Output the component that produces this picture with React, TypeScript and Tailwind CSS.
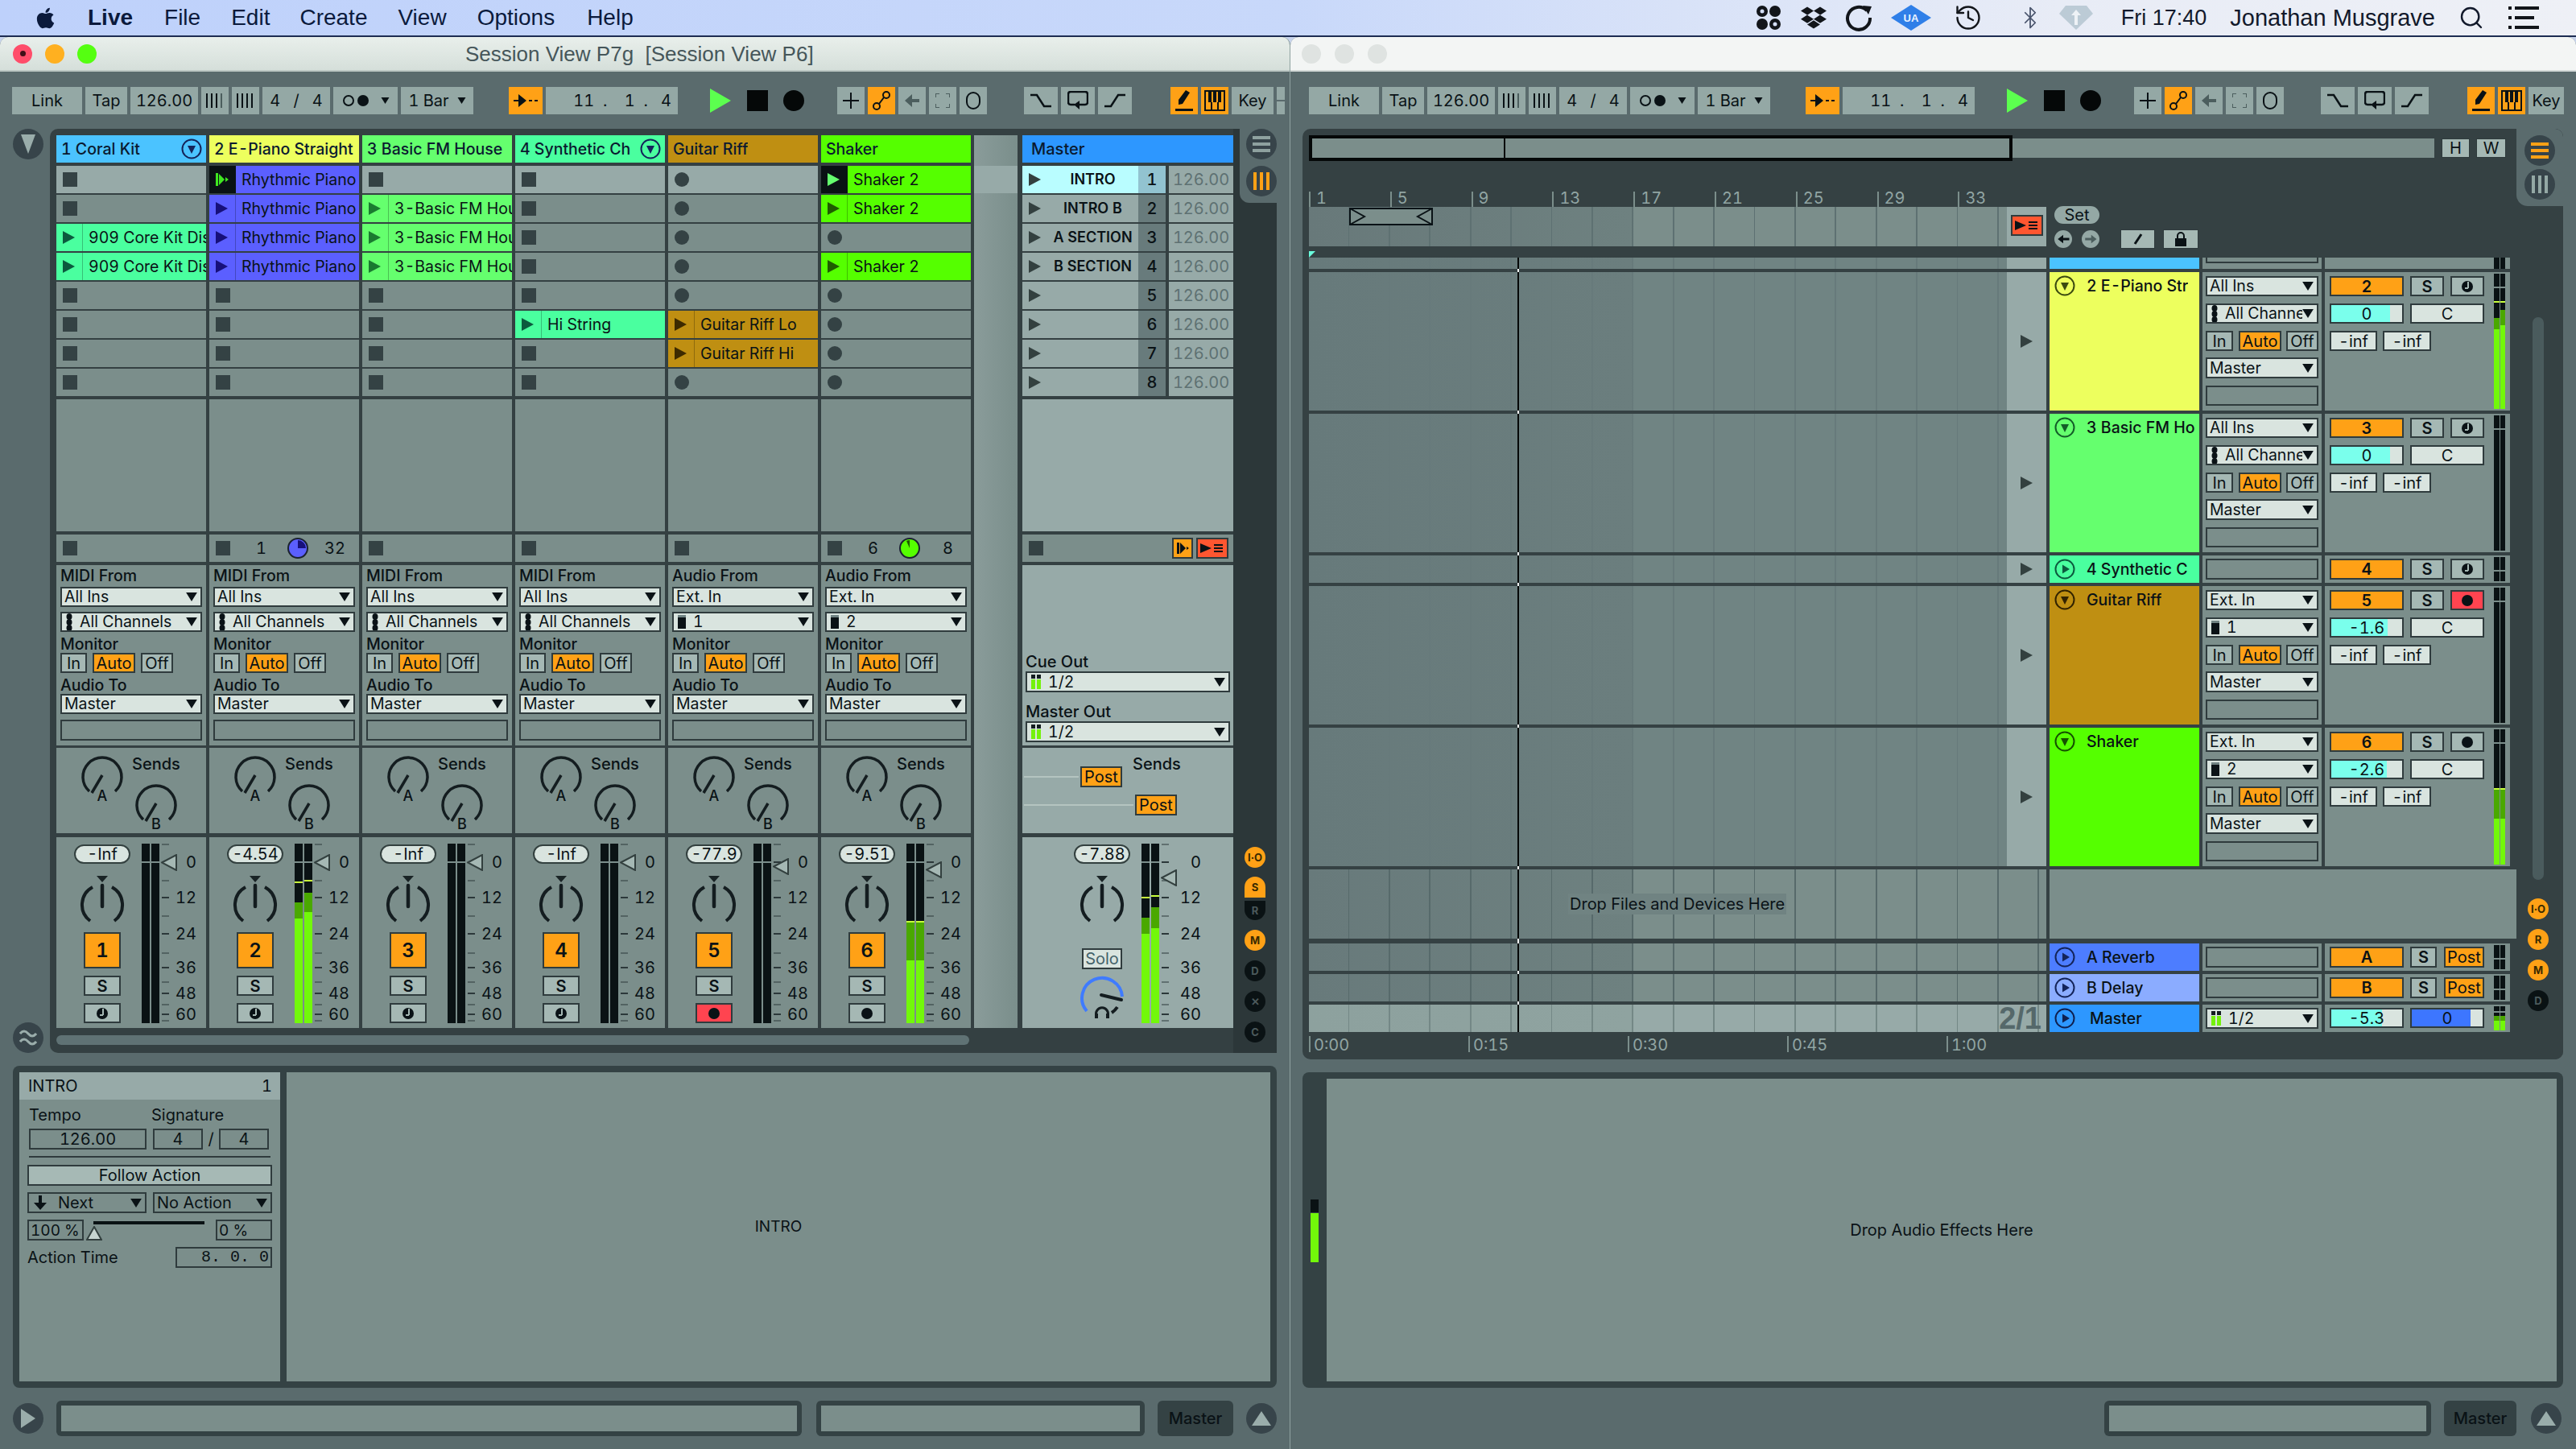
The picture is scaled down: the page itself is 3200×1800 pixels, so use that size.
import type { ReactNode } from "react";
import { FaApple, FaDropbox } from "react-icons/fa";
import { Bluetooth, History, Search } from "lucide-react";

// ---------- small drawn bits ----------

function Play({ className = "fill-[#33403f]", w = 15, h = 16 }: { className?: string; w?: number; h?: number }) {
  return (
    <svg width={w} height={h} viewBox="0 0 10 10" preserveAspectRatio="none" className={`shrink-0 ${className}`}>
      <polygon points="0,0 10,5 0,10" />
    </svg>
  );
}

function Caret({ size = 14 }: { size?: number }) {
  return (
    <svg width={size} height={size - 3} viewBox="0 0 10 8" className="shrink-0 fill-[#0a1216]">
      <polygon points="0,0 10,0 5,8" />
    </svg>
  );
}

function FoldIcon({ open = true, stroke = "stroke-[#14245a]", fill = "fill-[#14245a]" }: { open?: boolean; stroke?: string; fill?: string }) {
  return (
    <svg width="26" height="26" viewBox="0 0 26 26" className="shrink-0">
      <circle cx="13" cy="13" r="11.5" fill="none" strokeWidth="2" className={stroke} />
      {open ? <polygon points="8,9 18,9 13,19" className={fill} /> : <polygon points="10,7.5 19,13 10,18.5" className={fill} />}
    </svg>
  );
}

function SendKnob({ letter }: { letter: string }) {
  return (
    <svg width="56" height="60" viewBox="0 0 56 60" className="shrink-0">
      <path d="M12 46 A24 24 0 1 1 44 46" fill="none" stroke="#141d20" strokeWidth="3.5" />
      <line x1="28" y1="26" x2="15" y2="48" stroke="#141d20" strokeWidth="3.5" />
      <text x="28" y="58" textAnchor="middle" fontSize="18" fontWeight="500" fill="#0a1216" fontFamily="Inter, sans-serif">
        {letter}
      </text>
    </svg>
  );
}

function PanKnob() {
  return (
    <svg width="56" height="60" viewBox="0 0 56 60" className="shrink-0">
      <polygon points="21,0 35,0 28,8" fill="#1a2426" />
      <path d="M16 14 A25 25 0 0 0 13 56" fill="none" stroke="#141d20" strokeWidth="4" />
      <path d="M40 14 A25 25 0 0 1 43 56" fill="none" stroke="#141d20" strokeWidth="4" />
      <line x1="28" y1="12" x2="28" y2="38" stroke="#141d20" strokeWidth="4.5" strokeLinecap="round" />
    </svg>
  );
}

function CueKnob() {
  return (
    <svg width="56" height="56" viewBox="0 0 56 56" className="shrink-0">
      <path d="M9 44 A25 25 0 1 1 53 26" fill="none" stroke="#3f7bff" strokeWidth="4" />
      <line x1="27" y1="24" x2="52" y2="30" stroke="#141d20" strokeWidth="4" strokeLinecap="round" />
      <path d="M47 39 A25 25 0 0 1 40 46" fill="none" stroke="#141d20" strokeWidth="4" />
      <path d="M21 50 A7.5 7.5 0 1 1 35 50" fill="none" stroke="#141d20" strokeWidth="3" />
      <rect x="19" y="47" width="4" height="6" fill="#141d20" />
      <rect x="33" y="47" width="4" height="6" fill="#141d20" />
    </svg>
  );
}

function MiniMeter() {
  return (
    <svg width="12" height="18" viewBox="0 0 12 18" className="shrink-0">
      <rect x="0" y="0" width="5" height="5" fill="#141d20" />
      <rect x="7" y="0" width="5" height="5" fill="#141d20" />
      <rect x="0" y="6" width="5" height="12" fill="#74f20c" />
      <rect x="7" y="6" width="5" height="12" fill="#74f20c" />
    </svg>
  );
}

function ChainIcon() {
  return (
    <svg width="8" height="22" viewBox="0 0 8 22" className="shrink-0 fill-[#0a1216]">
      <ellipse cx="4" cy="4" rx="3.5" ry="4" />
      <ellipse cx="4" cy="11" rx="3.5" ry="4" />
      <ellipse cx="4" cy="18" rx="3.5" ry="4" />
    </svg>
  );
}

function InputIcon() {
  return (
    <svg width="10" height="17" viewBox="0 0 10 17" className="shrink-0">
      <rect width="10" height="3" fill="#6f8282" />
      <rect y="3" width="10" height="14" fill="#0a1216" />
    </svg>
  );
}

function MonitorGlyph() {
  return (
    <svg width="16" height="16" viewBox="0 0 16 16">
      <circle cx="8" cy="8" r="7" fill="#0a1216" />
      <rect x="8" y="2" width="2" height="8" fill="#a5b8b4" />
      <rect x="5" y="9" width="4" height="2" fill="#a5b8b4" />
    </svg>
  );
}

// ---------- controls ----------

const box = "border-[2px] border-[#2f3b3d]";

function Select({ label, icon, w = "w-full", h = "h-[25px]" }: { label: string; icon?: ReactNode; w?: string; h?: string }) {
  return (
    <div className={`${w} ${h} ${box} bg-[#d9e4df] flex items-center pl-[3px] pr-[4px] text-[19.5px] leading-[21px] text-[#0a1216] overflow-hidden`}>
      {icon && <span className="ml-[2px] mr-[9px] flex items-center">{icon}</span>}
      <span className="flex-1 min-w-0 overflow-hidden whitespace-nowrap">{label}</span>
      <Caret />
    </div>
  );
}

function Square({ w, h = "h-[25px]", on, red, soft, children }: { w: string; h?: string; on?: boolean; red?: boolean; soft?: boolean; children?: ReactNode }) {
  const bg = on ? "bg-[#ffa116]" : red ? "bg-[#ff4450]" : soft ? "bg-[#d9e4df]" : "bg-[#a5b8b4]";
  return (
    <div className={`${w} ${h} ${box} ${bg} flex items-center justify-center text-[20px] leading-none text-[#0a1216] shrink-0`}>{children}</div>
  );
}

function Monitor({ w1, w2, w3, gapA, gapB }: { w1: string; w2: string; w3: string; gapA: string; gapB: string }) {
  return (
    <div className="flex">
      <Square w={w1}>In</Square>
      <div className={gapA} />
      <Square w={w2} on>Auto</Square>
      <div className={gapB} />
      <Square w={w3}>Off</Square>
    </div>
  );
}

type Bar = { peak?: number; dark: number; bright: number };

function MeterBar({ bar, w, split, total }: { bar?: Bar; w: string; split: number; total: number }) {
  return (
    <div className={`${w} h-full relative bg-[#0a1214] flex flex-col`}>
      {bar && (
        <>
          <div style={{ height: bar.dark }} className="shrink-0" />
          <div style={{ height: bar.bright - bar.dark }} className="shrink-0 bg-[#4aa800]" />
          <div style={{ height: total - bar.bright }} className="shrink-0 bg-[#72f80a]" />
          {bar.peak !== undefined && <div style={{ top: bar.peak }} className="absolute left-0 right-0 h-[2px] bg-[#c8ff3c]" />}
        </>
      )}
      <div style={{ top: split }} className="absolute left-0 right-0 h-[2px] bg-[#7b8e8b]" />
    </div>
  );
}

const tickTops = [0, 22, 45, 66, 89, 111, 135, 153, 171, 185, 199, 211, 219];
const scaleLabels = [
  { top: 22, t: "0" },
  { top: 66, t: "12" },
  { top: 111, t: "24" },
  { top: 153, t: "36" },
  { top: 185, t: "48" },
  { top: 211, t: "60" },
];

function Scale({ fader, wide }: { fader: number; wide?: boolean }) {
  return (
    <div className={`relative h-[223px] ${wide ? "w-[50px]" : "w-[44px]"}`}>
      {tickTops.map((t) => (
        <div
          key={t}
          style={{ top: t }}
          className={`absolute left-[1px] h-[2px] bg-[#2c383a] ${[22, 66, 111, 153, 185, 211].includes(t) ? "w-[9px]" : "w-[9px] opacity-50"}`}
        />
      ))}
      {scaleLabels.map((l) => (
        <div key={l.t} style={{ top: l.top - 10 }} className="absolute right-0 text-[20px] leading-[22px] text-[#0a1216]">
          {l.t}
        </div>
      ))}
      <svg style={{ top: fader }} width="20" height="21" viewBox="0 0 20 21" className="absolute left-0">
        <polygon points="1,10.5 19,1 19,20" fill="#a5b8b4" stroke="#33403f" strokeWidth="2" />
      </svg>
    </div>
  );
}

// ---------- session view data ----------

type Track = {
  title: string;
  head: string;
  fold?: boolean;
  clipBg: string;
  tri: string;
  clips: (string | null)[];
  audio?: boolean;
  inA: string;
  inB: string;
  inIcon: ReactNode;
  vol: string;
  num: string;
  fader: number;
  bars?: [Bar, Bar];
  stop?: ReactNode;
  arm?: boolean;
};

const rhythm = "Rhythmic Piano";
const basic = "3-Basic FM House";

const tracks: Track[] = [
  {
    title: "1 Coral Kit", head: "bg-[#4bc3ff]", fold: true, clipBg: "bg-[#4aff9f]", tri: "fill-[#0c5a3e]",
    clips: [null, null, "909 Core Kit Dis", "909 Core Kit Dis", null, null, null, null],
    inA: "All Ins", inB: "All Channels", inIcon: <ChainIcon />, vol: "-Inf", num: "1", fader: 13,
  },
  {
    title: "2 E-Piano Straight", head: "bg-[#edff5e]", clipBg: "bg-[#5b5fff]", tri: "fill-[#17107a]",
    clips: [rhythm, rhythm, rhythm, rhythm, null, null, null, null],
    inA: "All Ins", inB: "All Channels", inIcon: <ChainIcon />, vol: "-4.54", num: "2", fader: 13,
    bars: [{ peak: 47, dark: 73, bright: 93 }, { peak: 45, dark: 61, bright: 85 }],
    stop: (
      <div className="flex flex-1 items-center text-[20px] text-[#0a1216]">
        <span className="ml-[32px]">1</span>
        <svg width="26" height="26" viewBox="0 0 26 26" className="ml-[26px]">
          <circle cx="13" cy="13" r="12" fill="#5b5fff" stroke="#1b2230" strokeWidth="2" />
          <path d="M13 13 L13 3 A10 10 0 0 1 23 13 Z" fill="#17107a" />
        </svg>
        <span className="ml-[20px]">32</span>
      </div>
    ),
  },
  {
    title: "3 Basic FM House", head: "bg-[#65ff6e]", clipBg: "bg-[#65ff6e]", tri: "fill-[#1a7a30]",
    clips: [null, basic, basic, basic, null, null, null, null],
    inA: "All Ins", inB: "All Channels", inIcon: <ChainIcon />, vol: "-Inf", num: "3", fader: 13,
  },
  {
    title: "4 Synthetic Ch", head: "bg-[#4aff9f]", fold: true, clipBg: "bg-[#4aff9f]", tri: "fill-[#0c5a3e]",
    clips: [null, null, null, null, null, "Hi String", null, null],
    inA: "All Ins", inB: "All Channels", inIcon: <ChainIcon />, vol: "-Inf", num: "4", fader: 13,
  },
  {
    title: "Guitar Riff", head: "bg-[#bf8f12]", clipBg: "bg-[#bf8f12]", tri: "fill-[#3d2a00]",
    clips: [null, null, null, null, null, "Guitar Riff Lo", "Guitar Riff Hi", null], audio: true,
    inA: "Ext. In", inB: "1", inIcon: <InputIcon />, vol: "-77.9", num: "5", fader: 18, arm: true,
  },
  {
    title: "Shaker", head: "bg-[#55ff00]", clipBg: "bg-[#55ff00]", tri: "fill-[#1f5c00]",
    clips: ["Shaker 2", "Shaker 2", null, "Shaker 2", null, null, null, null], audio: true,
    inA: "Ext. In", inB: "2", inIcon: <InputIcon />, vol: "-9.51", num: "6", fader: 22,
    bars: [{ peak: 96, dark: 96, bright: 145 }, { peak: 96, dark: 96, bright: 145 }],
    stop: (
      <div className="flex flex-1 items-center text-[20px] text-[#0a1216]">
        <span className="ml-[32px]">6</span>
        <svg width="26" height="26" viewBox="0 0 26 26" className="ml-[26px]">
          <circle cx="13" cy="13" r="12" fill="#55ff00" stroke="#1b2230" strokeWidth="2" />
          <path d="M13 13 L13 3 A10 10 0 0 0 9 4 Z" fill="#1f5c00" />
        </svg>
        <span className="ml-[28px]">8</span>
      </div>
    ),
  },
];

const scenes = ["INTRO", "INTRO B", "A SECTION", "B SECTION", "", "", "", ""];

// ---------- session view ----------

function SlotRow({ t, clip, i }: { t: Track; clip: string | null; i: number }) {
  const live = i === 0;
  if (clip) {
    const launching = live && t.title.startsWith("2");
    const playing = live && t.title === "Shaker";
    return (
      <div className={`h-[34px] flex ${t.clipBg}`}>
        <div className={`w-[33px] shrink-0 flex items-center pl-[8px] ${launching || playing ? "bg-[#0a1214]" : "border-r border-[#00000040]"}`}>
          {launching ? (
            <svg width="16" height="16" viewBox="0 0 16 16" className="fill-[#3fe820]">
              <rect x="0" y="0" width="3" height="16" />
              <polygon points="4,1 11,8 4,15" />
              <polygon points="12,5 16,8 12,11" />
            </svg>
          ) : playing ? (
            <Play className="fill-[#65ff6e]" />
          ) : (
            <Play className={t.tri} />
          )}
        </div>
        <div className="pl-[7px] flex items-center text-[19.5px] leading-[26px] text-[#0a1216] whitespace-nowrap overflow-hidden">{clip}</div>
      </div>
    );
  }
  return (
    <div className={`h-[34px] flex items-center pl-[8px] ${live ? "bg-[#97aaa8]" : "bg-[#7b8e8b]"}`}>
      <div className={`w-[18px] h-[18px] bg-[#344244] ${t.audio ? "rounded-full" : ""}`} />
    </div>
  );
}

function TrackColumn({ t }: { t: Track }) {
  const label = "text-[19.5px] font-medium leading-[22px] text-[#0a1216] whitespace-nowrap";
  return (
    <div className="w-[186px] shrink-0 flex flex-col">
      <div className={`h-[34px] ${t.head} flex items-center justify-between pl-[6px] pr-[5px] text-[19.5px] font-medium leading-[26px] text-[#0a1a30] whitespace-nowrap overflow-hidden`}>
        <span className="overflow-hidden">{t.title}</span>
        {t.fold && <FoldIcon />}
      </div>
      <div className="mt-[4px] flex flex-col gap-[2px]">
        {t.clips.map((c, i) => (
          <SlotRow key={i} t={t} clip={c} i={i} />
        ))}
      </div>
      <div className="mt-[4px] h-[164px] bg-[#7b8e8b]" />
      <div className="mt-[4px] h-[34px] bg-[#7b8e8b] flex items-center pl-[8px]">
        <div className="w-[18px] h-[18px] shrink-0 bg-[#344244]" />
        {t.stop}
      </div>
      <div className="mt-[4px] h-[224px] bg-[#7b8e8b] px-[5px] flex flex-col">
        <div className={`h-[27px] flex items-end pb-[3px] ${label}`}>{t.audio ? "Audio From" : "MIDI From"}</div>
        <Select label={t.inA} />
        <div className="mt-[6px]"><Select label={t.inB} icon={t.inIcon} /></div>
        <div className={`h-[26px] flex items-end ${label}`}>Monitor</div>
        <Monitor w1="w-[33px]" w2="w-[53px]" w3="w-[40px]" gapA="w-[7px]" gapB="w-[7px]" />
        <div className={`h-[26px] flex items-end ${label}`}>Audio To</div>
        <Select label="Master" />
        <div className={`mt-[7px] h-[26px] ${box}`} />
      </div>
      <div className="mt-[3px] h-[106px] bg-[#7b8e8b] flex">
        <div className="ml-[29px] mt-[8px]"><SendKnob letter="A" /></div>
        <div className="ml-[6px] flex flex-col">
          <div className="mt-[9px] h-[22px] text-[20px] font-medium leading-[22px] text-[#0a1216] whitespace-nowrap pl-[3px]">Sends</div>
          <div className="mt-[12px] ml-[5px]"><SendKnob letter="B" /></div>
        </div>
      </div>
      <div className="mt-[5px] h-[237px] bg-[#7b8e8b] flex pl-[22px]">
        <div className="w-[70px] shrink-0 flex flex-col items-center">
          <div className="mt-[9px] w-[70px] h-[24px] rounded-full border-[2px] border-[#33403f] bg-[#d9e4df] flex items-center justify-center text-[20px] leading-none text-[#0a1216]">{t.vol}</div>
          <div className="mt-[15px]"><PanKnob /></div>
          <div className={`mt-[10px] w-[46px] h-[45px] ${box} bg-[#ffa116] flex items-center justify-center text-[24px] font-semibold leading-none text-[#0a1216]`}>{t.num}</div>
          <Square w="w-[46px] mt-[9px]">
            <span className="font-semibold">S</span>
          </Square>
          {t.audio ? (
            <Square w="w-[46px] mt-[9px]" red={t.arm}>
              <span className="w-[14px] h-[14px] rounded-full bg-[#0a1216]" />
            </Square>
          ) : (
            <Square w="w-[46px] mt-[9px]"><MonitorGlyph /></Square>
          )}
        </div>
        <div className="ml-[14px] mt-[8px] h-[223px] flex gap-[2px]">
          <MeterBar bar={t.bars?.[0]} w="w-[10px]" split={22} total={223} />
          <MeterBar bar={t.bars?.[1]} w="w-[10px]" split={22} total={223} />
        </div>
        <div className="ml-[2px] mt-[8px]"><Scale fader={t.fader} /></div>
      </div>
    </div>
  );
}

function MasterColumn() {
  const label = "text-[20px] font-medium leading-[20px] text-[#0a1216] whitespace-nowrap";
  return (
    <div className="w-[262px] shrink-0 flex flex-col">
      <div className="h-[34px] bg-[#2d97ff] flex items-center pl-[11px] text-[20px] font-medium text-[#0a1a30]">Master</div>
      <div className="mt-[4px] flex flex-col gap-[2px]">
        {scenes.map((s, i) => (
          <div key={i} className="h-[34px] flex text-[18px] leading-none">
            <div className={`w-[144px] flex items-center pl-[8px] ${i === 0 ? "bg-[#b9fdff]" : "bg-[#97aaa8]"}`}>
              <Play className="fill-[#33403f]" />
              <span className="flex-1 text-center font-semibold text-[#0a1216] whitespace-nowrap pl-[8px]">{s}</span>
            </div>
            <div className={`w-[34px] flex items-center justify-center text-[20px] font-medium text-[#0a1216] ${i === 0 ? "bg-[#92c3d0]" : "bg-[#687b7c]"}`}>{i + 1}</div>
            <div className="ml-[4px] w-[80px] bg-[#97aaa8] flex items-center justify-center text-[20px] text-[#5e7172]">126.00</div>
          </div>
        ))}
      </div>
      <div className="mt-[4px] h-[164px] bg-[#97aaa8]" />
      <div className="mt-[4px] h-[34px] bg-[#7b8e8b] flex items-center pl-[8px] pr-[6px]">
        <div className="w-[18px] h-[18px] bg-[#344244]" />
        <div className="ml-auto w-[26px] h-[26px] border-[2px] border-[#2f3b3d] bg-[#ffa116] flex items-center justify-center">
          <svg width="16" height="16" viewBox="0 0 16 16" className="fill-[#0a1216]">
            <rect x="1" y="1" width="3" height="14" />
            <polygon points="5,1 12,8 5,15" />
            <polygon points="13,6 16,8 13,10" />
          </svg>
        </div>
        <div className="ml-[4px] w-[40px] h-[26px] border-[2px] border-[#2f3b3d] bg-[#ff5630] flex items-center justify-center">
          <svg width="30" height="16" viewBox="0 0 30 16" className="fill-[#0a1216]">
            <polygon points="0,2 14,8 0,14" />
            <rect x="17" y="3" width="11" height="2" />
            <rect x="17" y="7" width="11" height="2" />
            <rect x="17" y="11" width="11" height="2" />
          </svg>
        </div>
      </div>
      <div className="mt-[4px] h-[224px] bg-[#97aaa8] px-[4px] flex flex-col justify-end pb-[4px]">
        <div className={`h-[22px] ${label}`}>Cue Out</div>
        <Select label="1/2" icon={<MiniMeter />} h="h-[26px]" />
        <div className={`mt-[14px] h-[22px] ${label}`}>Master Out</div>
        <Select label="1/2" icon={<MiniMeter />} h="h-[26px]" />
      </div>
      <div className="mt-[3px] h-[106px] bg-[#97aaa8] flex flex-col relative">
        <div className="absolute left-[137px] top-[9px] h-[22px] text-[20px] font-medium leading-[22px] text-[#0a1216]">Sends</div>
        <div className="mt-[23px] h-[26px] flex items-center pl-[2px]">
          <div className="w-[68px] h-[2px] bg-[#b4c4c0]" />
          <div className={`ml-[2px] w-[52px] h-[26px] ${box} bg-[#ffa116] flex items-center justify-center text-[20px] leading-none text-[#0a1216]`}>Post</div>
        </div>
        <div className="mt-[9px] h-[26px] flex items-center pl-[2px]">
          <div className="w-[136px] h-[2px] bg-[#b4c4c0]" />
          <div className={`ml-[2px] w-[52px] h-[26px] ${box} bg-[#ffa116] flex items-center justify-center text-[20px] leading-none text-[#0a1216]`}>Post</div>
        </div>
      </div>
      <div className="mt-[5px] h-[237px] bg-[#97aaa8] flex pl-[64px]">
        <div className="w-[70px] shrink-0 flex flex-col items-center">
          <div className="mt-[9px] w-[70px] h-[24px] rounded-full border-[2px] border-[#33403f] bg-[#d9e4df] flex items-center justify-center text-[20px] leading-none text-[#0a1216]">-7.88</div>
          <div className="mt-[15px]"><PanKnob /></div>
          <div className={`mt-[30px] w-[50px] h-[26px] ${box} bg-[#d9e4df] flex items-center justify-center text-[20px] leading-none text-[#44626a]`}>Solo</div>
          <div className="mt-[8px]"><CueKnob /></div>
        </div>
        <div className="ml-[14px] mt-[8px] h-[223px] flex gap-[2px]">
          <MeterBar bar={{ peak: 66, dark: 92, bright: 112 }} w="w-[10px]" split={22} total={223} />
          <MeterBar bar={{ peak: 64, dark: 79, bright: 105 }} w="w-[10px]" split={22} total={223} />
        </div>
        <div className="ml-[2px] mt-[8px]"><Scale fader={32} wide /></div>
      </div>
    </div>
  );
}

function SideDot({ label, on, top = "", shape = "rounded-full", h = "h-[26px]" }: { label: string; on?: boolean; top?: string; shape?: string; h?: string }) {
  return (
    <div className={`w-[26px] ${h} ${shape} ${top} ${on ? "bg-[#ffa116] text-[#3a2a00]" : "bg-[#0a1214] text-[#4c5a5c]"} flex items-center justify-center text-[13px] font-bold leading-none`}>
      {label}
    </div>
  );
}

function CircleBtn({ children, top = "" }: { children: ReactNode; top?: string }) {
  return <div className={`w-[38px] h-[38px] rounded-full bg-[#37444a] flex items-center justify-center shrink-0 ${top}`}>{children}</div>;
}

const bars3 = (c: string) => (
  <svg width="22" height="20" viewBox="0 0 22 20" className={c}>
    <rect width="22" height="4" />
    <rect y="8" width="22" height="4" />
    <rect y="16" width="22" height="4" />
  </svg>
);
const cols3 = (c: string) => (
  <svg width="20" height="22" viewBox="0 0 20 22" className={c}>
    <rect width="4" height="22" />
    <rect x="8" width="4" height="22" />
    <rect x="16" width="4" height="22" />
  </svg>
);

// ---------- toolbar ----------

function TB({ w, on, ml = "ml-[4px]", children }: { w: string; on?: boolean; ml?: string; children?: ReactNode }) {
  return (
    <div className={`${w} ${ml} h-[34px] shrink-0 ${on ? "bg-[#ffa116]" : "bg-[#94a8a5]"} flex items-center justify-center text-[20px] leading-none text-[#0a1216] whitespace-nowrap`}>
      {children}
    </div>
  );
}

function BarLines({ n }: { n: number }) {
  return (
    <svg width="24" height="18" viewBox="0 0 24 18">
      {Array.from({ length: 4 }).map((_, i) => (
        <rect key={i} x={i * 6 + 1} width="2" height="18" fill={i < n ? "#0a1216" : "#4c5e5e"} />
      ))}
    </svg>
  );
}

function Toolbar({ first, keyW, sliver }: { first: string; keyW: string; sliver?: boolean }) {
  const ink = "stroke-[#0a1216]";
  return (
    <div className={`h-[71px] pt-[19px] flex items-start shrink-0 ${first}`}>
      <TB w="w-[87px]" ml="ml-0">Link</TB>
      <TB w="w-[52px]">Tap</TB>
      <TB w="w-[84px]">126.00</TB>
      <TB w="w-[34px]"><BarLines n={3} /></TB>
      <TB w="w-[34px]"><BarLines n={4} /></TB>
      <TB w="w-[84px]"><span className="whitespace-pre">4   /   4</span></TB>
      <TB w="w-[80px]">
        <svg width="34" height="18" viewBox="0 0 34 18" className="mr-[14px]">
          <circle cx="8" cy="9" r="6" fill="none" stroke="#0a1216" strokeWidth="2" />
          <circle cx="26" cy="9" r="7" fill="#0a1216" />
        </svg>
        <Caret size={11} />
      </TB>
      <TB w="w-[90px]"><span className="mr-[10px]">1 Bar</span><Caret size={11} /></TB>
      <TB w="w-[42px]" on ml="ml-[44px]">
        <svg width="30" height="18" viewBox="0 0 30 18" className="fill-[#0a1216]">
          <polygon points="6,1 16,9 6,17" />
          <rect y="8" width="10" height="2" />
          <rect x="19" y="8" width="4" height="2" />
          <rect x="26" y="8" width="4" height="2" />
        </svg>
      </TB>
      <TB w="w-[164px]"><span className="w-full whitespace-pre text-right pr-[8px]">11  .    1  .   4</span></TB>
      <div className="ml-[40px] h-[34px] flex items-center">
        <svg width="26" height="30" viewBox="0 0 26 30" className="fill-[#5cff4f]"><polygon points="0,0 26,15 0,30" /></svg>
      </div>
      <div className="ml-[20px] mt-[4px] w-[26px] h-[26px] bg-[#050808]" />
      <div className="ml-[19px] mt-[4px] w-[26px] h-[26px] rounded-full bg-[#050808]" />
      <TB w="w-[34px]" ml="ml-[41px]">
        <svg width="20" height="20" viewBox="0 0 20 20" className="fill-[#0a1216]"><rect x="9" width="2" height="20" /><rect y="9" width="20" height="2" /></svg>
      </TB>
      <TB w="w-[34px]" on>
        <svg width="22" height="24" viewBox="0 0 22 24" fill="none" strokeWidth="2" className={ink}>
          <circle cx="5" cy="19" r="4" /><circle cx="17" cy="5" r="4" /><line x1="8" y1="16" x2="14" y2="8" />
        </svg>
      </TB>
      <TB w="w-[34px]">
        <svg width="18" height="16" viewBox="0 0 18 16" className="fill-[#4c5e5e]"><polygon points="0,8 9,0 9,6 18,6 18,10 9,10 9,16" /></svg>
      </TB>
      <TB w="w-[34px]">
        <svg width="18" height="18" viewBox="0 0 18 18" fill="none" strokeWidth="2" className="stroke-[#4c5e5e]">
          <path d="M0 5V0H5M13 0H18V5M18 13V18H13M5 18H0V13" />
        </svg>
      </TB>
      <TB w="w-[34px]"><div className="w-[18px] h-[22px] rounded-full border-[2px] border-[#0a1216]" /></TB>
      <TB w="w-[42px]" ml="ml-[46px]">
        <svg width="26" height="18" viewBox="0 0 26 18" fill="none" strokeWidth="2.5" className={ink}><path d="M0 2H8L17 16H26" /></svg>
      </TB>
      <TB w="w-[42px]">
        <svg width="26" height="24" viewBox="0 0 26 24" fill="none" strokeWidth="2.5" className={ink}>
          <path d="M9 17H4Q1 17 1 14V4Q1 1 4 1H22Q25 1 25 4V14Q25 17 22 17H14" />
          <polygon points="15,12 15,23 8,17" fill="#0a1216" stroke="none" />
        </svg>
      </TB>
      <TB w="w-[42px]">
        <svg width="26" height="18" viewBox="0 0 26 18" fill="none" strokeWidth="2.5" className={ink}><path d="M0 16H8L17 2H26" /></svg>
      </TB>
      <TB w="w-[34px]" on ml="ml-[48px]">
        <svg width="22" height="26" viewBox="0 0 22 26" className="fill-[#0a1216]">
          <polygon points="4,18 4,12 13,0 18,3 9,17" />
          <rect y="23" width="22" height="3" />
        </svg>
      </TB>
      <TB w="w-[34px]" on>
        <svg width="26" height="26" viewBox="0 0 26 26">
          <rect x="1" y="1" width="24" height="24" fill="none" stroke="#0a1216" strokeWidth="2" />
          <rect x="5" y="1" width="4" height="14" fill="#0a1216" />
          <rect x="11" y="1" width="4" height="14" fill="#0a1216" />
          <rect x="17" y="1" width="4" height="14" fill="#0a1216" />
          <rect x="8" y="15" width="2" height="10" fill="#0a1216" />
          <rect x="16" y="15" width="2" height="10" fill="#0a1216" />
        </svg>
      </TB>
      <TB w={keyW}>Key</TB>
      {sliver && (
        <div className="ml-[4px] w-[10px] h-[34px] flex flex-col justify-between">
          <div className="h-[16px] bg-[#94a8a5]" />
          <div className="h-[16px] bg-[#94a8a5]" />
        </div>
      )}
    </div>
  );
}

// ---------- arrangement view ----------

const laneBase =
  "bg-[image:repeating-linear-gradient(90deg,transparent_0,transparent_48.6px,#677a7b_48.6px,#677a7b_50.4px),linear-gradient(90deg,#677a7b,#6b7e7e_400px,#708483_404px)]";
const laneBold =
  "bg-[image:repeating-linear-gradient(90deg,transparent_0,transparent_48.6px,#576a6b_48.6px,#576a6b_50.4px),linear-gradient(90deg,#687a7b,#6e8180_400px,#7b8e8b_404px)]";
const laneLight =
  "bg-[image:repeating-linear-gradient(90deg,transparent_0,transparent_48.6px,#748886_48.6px,#748886_50.4px),linear-gradient(90deg,#8da19e,#8fa3a0_400px,#97aaa8_404px)]";

function Lane({ w, kind = laneBase, children }: { w: string; kind?: string; children?: ReactNode }) {
  return (
    <div className={`${w} shrink-0 h-full relative ${kind}`}>
      <div className="absolute left-[259px] top-0 bottom-0 w-[2px] bg-[#050808]" />
      {children}
    </div>
  );
}

function Launch() {
  return (
    <div className="w-[49px] shrink-0 h-full bg-[#97aaa8] flex items-center justify-center">
      <Play className="fill-[#33403f]" />
    </div>
  );
}

function NameCell({ name, bg, open = true, stroke, fill, ink = "text-[#0a1216]", pl = "ml-[14px]" }: { name: string; bg: string; open?: boolean; stroke: string; fill: string; ink?: string; pl?: string }) {
  return (
    <div className={`w-[186px] shrink-0 h-full ${bg} pl-[6px] pt-[4px] flex items-start`}>
      <FoldIcon open={open} stroke={stroke} fill={fill} />
      <span className={`${pl} h-[26px] flex items-center text-[19.5px] font-medium leading-[26px] ${ink} whitespace-nowrap overflow-hidden`}>{name}</span>
    </div>
  );
}

function BarValue({ v, width, blue }: { v: string; width: number; blue?: boolean }) {
  return (
    <div className={`w-[92px] h-[25px] ${box} bg-[#d9e4df] relative flex items-center justify-center text-[20px] leading-none text-[#0a1216]`}>
      <div style={{ width: `${width}%` }} className={`absolute left-0 top-0 bottom-0 ${blue ? "bg-[#3d76ff]" : "bg-[#7affec]"}`} />
      <span className="relative">{v}</span>
    </div>
  );
}

type ArrTrack = {
  name: string;
  bg: string;
  stroke: string;
  fill: string;
  inA: string;
  inB: string;
  icon: ReactNode;
  num: string;
  pan: string;
  panW: number;
  mon: ReactNode;
  bars?: [Bar, Bar];
};

const arrTracks: ArrTrack[] = [
  {
    name: "2 E-Piano Str", bg: "bg-[#edff5e]", stroke: "stroke-[#3c4a10]", fill: "fill-[#3c4a10]",
    inA: "All Ins", inB: "All Channels", icon: <ChainIcon />, num: "2", pan: "0", panW: 83, mon: <Square w="w-[42px]"><MonitorGlyph /></Square>,
    bars: [{ peak: 34, dark: 55, bright: 69 }, { peak: 34, dark: 45, bright: 64 }],
  },
  {
    name: "3 Basic FM Ho", bg: "bg-[#65ff6e]", stroke: "stroke-[#135d28]", fill: "fill-[#135d28]",
    inA: "All Ins", inB: "All Channels", icon: <ChainIcon />, num: "3", pan: "0", panW: 83, mon: <Square w="w-[42px]"><MonitorGlyph /></Square>,
  },
];

const arrAudio: ArrTrack[] = [
  {
    name: "Guitar Riff", bg: "bg-[#bf8f12]", stroke: "stroke-[#322300]", fill: "fill-[#322300]",
    inA: "Ext. In", inB: "1", icon: <InputIcon />, num: "5", pan: "-1.6", panW: 80,
    mon: <Square w="w-[42px]" red><span className="w-[14px] h-[14px] rounded-full bg-[#0a1216]" /></Square>,
  },
  {
    name: "Shaker", bg: "bg-[#55ff00]", stroke: "stroke-[#155000]", fill: "fill-[#155000]",
    inA: "Ext. In", inB: "2", icon: <InputIcon />, num: "6", pan: "-2.6", panW: 78,
    mon: <Square w="w-[42px]"><span className="w-[14px] h-[14px] rounded-full bg-[#0a1216]" /></Square>,
    bars: [{ peak: 73, dark: 73, bright: 111 }, { peak: 73, dark: 73, bright: 111 }],
  },
];

function MiniMeterPair({ bars, total }: { bars?: [Bar, Bar]; total: number }) {
  return (
    <div className="ml-[12px] mt-[2px] h-[calc(100%-4px)] flex gap-[1px]">
      <MeterBar bar={bars?.[0]} w="w-[6.5px]" split={16} total={total} />
      <MeterBar bar={bars?.[1]} w="w-[6.5px]" split={16} total={total} />
    </div>
  );
}

function ArrRow({ t }: { t: ArrTrack }) {
  return (
    <div className="h-[172px] flex">
      <Lane w="w-[867px]" />
      <Launch />
      <div className="w-[4px]" />
      <NameCell name={t.name} bg={t.bg} stroke={t.stroke} fill={t.fill} />
      <div className="w-[4px]" />
      <div className="w-[148px] shrink-0 h-full bg-[#7b8e8b] px-[4px] pt-[5px] flex flex-col">
        <Select label={t.inA} />
        <div className="mt-[9px]"><Select label={t.inB} icon={t.icon} /></div>
        <div className="mt-[9px]">
          <Monitor w1="w-[34px]" w2="w-[53px]" w3="w-[40px]" gapA="w-[7px]" gapB="w-[6px]" />
        </div>
        <div className="mt-[8px]"><Select label="Master" h="h-[26px]" /></div>
        <div className={`mt-[9px] h-[25px] ${box}`} />
      </div>
      <div className="w-[4px]" />
      <div className="w-[230px] shrink-0 h-full bg-[#7b8e8b] pl-[6px] flex">
        <div className="w-[192px] pt-[5px] flex flex-col gap-[9px]">
          <div className="flex gap-[8px]">
            <Square w="w-[92px]" on><span className="font-semibold">{t.num}</span></Square>
            <Square w="w-[42px]"><span className="font-semibold">S</span></Square>
            {t.mon}
          </div>
          <div className="flex gap-[8px]">
            <BarValue v={t.pan} width={t.panW} />
            <Square w="w-[92px]" soft>C</Square>
          </div>
          <div className="flex gap-[7px]">
            <Square w="w-[59px]" soft>-inf</Square>
            <Square w="w-[60px]" soft>-inf</Square>
          </div>
        </div>
        <MiniMeterPair bars={t.bars} total={168} />
      </div>
    </div>
  );
}

function SmallRow({ name, bg, stroke, fill, open = false, pl, num, right, io, second, meter, lane = laneBase, launch, extra }: {
  name: string; bg: string; stroke: string; fill: string; open?: boolean; pl?: string; num?: string; right?: ReactNode; io?: ReactNode; second?: ReactNode; meter?: ReactNode; lane?: string; launch?: boolean; extra?: ReactNode;
}) {
  return (
    <div className="h-[34px] flex">
      {launch ? (
        <>
          <Lane w="w-[867px]" kind={lane} />
          <Launch />
        </>
      ) : (
        <Lane w="w-[916px]" kind={lane}>{extra}</Lane>
      )}
      <div className="w-[4px]" />
      <NameCell name={name} bg={bg} open={open} stroke={stroke} fill={fill} pl={pl} />
      <div className="w-[4px]" />
      <div className="w-[148px] shrink-0 h-full bg-[#7b8e8b] px-[4px] pt-[4px]">
        {io ?? <div className={`h-[26px] ${box}`} />}
      </div>
      <div className="w-[4px]" />
      <div className="w-[230px] shrink-0 h-full bg-[#7b8e8b] pl-[6px] flex">
        <div className="w-[192px] pt-[4px] flex gap-[8px]">
          {second ?? (
            <>
              <Square w="w-[92px]" h="h-[26px]" on><span className="font-semibold">{num}</span></Square>
              {right}
            </>
          )}
        </div>
        {meter ?? <MiniMeterPair total={30} />}
      </div>
    </div>
  );
}

function ArrangementPanel() {
  const rulerNums = ["1", "5", "9", "13", "17", "21", "25", "29", "33"];
  const time = ["0:00", "0:15", "0:30", "0:45", "1:00"];
  return (
    <div className="w-[1508px] shrink-0 pl-[8px] flex flex-col">
      {/* overview + H/W */}
      <div className="mt-[8px] h-[32px] flex items-center">
        <div className="w-[1398px] h-[24px] bg-[#7b8e8b] relative">
          <div className="absolute left-0 -top-[4px] -bottom-[4px] w-[874px] border-[4px] border-[#050808]">
            <div className="absolute left-[238px] top-0 bottom-0 w-[2px] bg-[#050808]" />
          </div>
        </div>
        <div className="ml-[9px] w-[35px] h-[24px] bg-[#a5b8b4] border border-[#2f3b3d] flex items-center justify-center text-[20px] leading-none text-[#0a1216]">H</div>
        <div className="ml-[8px] w-[37px] h-[24px] bg-[#a5b8b4] border border-[#2f3b3d] flex items-center justify-center text-[20px] leading-none text-[#0a1216]">W</div>
      </div>
      {/* ruler + locator controls */}
      <div className="h-[120px] flex">
        <div className="w-[867px] shrink-0 flex flex-col">
          <div className="mt-[38px] h-[19px] flex">
            {rulerNums.map((n) => (
              <div key={n} className="w-[100.8px] shrink-0 flex items-end border-l-[2px] border-[#7b8e8b] pl-[7px] text-[20px] leading-[21px] text-[#91a5a3]">{n}</div>
            ))}
          </div>
          <div className="h-[49px] relative bg-[image:repeating-linear-gradient(90deg,transparent_0,transparent_48.6px,#5e7172_48.6px,#5e7172_50.4px),linear-gradient(90deg,#68797a,#6e8180_400px,#7b8e8b_404px)]">
            <svg width="104" height="22" viewBox="0 0 104 22" className="absolute left-[50px] top-[1px]" fill="#7b8e8b" stroke="#0a1216" strokeWidth="2">
              <rect x="1" y="1" width="102" height="20" />
              <path d="M1 1L19 11L1 21M103 1L85 11L103 21" fill="none" />
            </svg>
          </div>
          <div className="h-[14px] flex items-end">
            <svg width="8" height="8" viewBox="0 0 8 8" className="fill-[#6affdd]"><polygon points="0,0 8,0 0,8" /></svg>
          </div>
        </div>
        <div className="w-[49px] mt-[57px] h-[49px] bg-[#97aaa8] flex items-start justify-center pt-[10px]">
          <div className="w-[40px] h-[26px] border-[2px] border-[#2f3b3d] bg-[#ff5630] flex items-center justify-center">
            <svg width="30" height="16" viewBox="0 0 30 16" className="fill-[#0a1216]">
              <polygon points="0,2 14,8 0,14" />
              <rect x="17" y="3" width="11" height="2" />
              <rect x="17" y="7" width="11" height="2" />
              <rect x="17" y="11" width="11" height="2" />
            </svg>
          </div>
        </div>
        <div className="ml-[10px] flex">
          <div className="flex flex-col">
            <div className="mt-[56px] w-[56px] h-[22px] rounded-full bg-[#94a8a5] flex items-center justify-center text-[20px] leading-none text-[#0a1216]">Set</div>
            <div className="mt-[8px] flex gap-[12px]">
              {[0, 1].map((i) => (
                <div key={i} className="w-[22px] h-[22px] rounded-full bg-[#94a8a5] flex items-center justify-center">
                  <svg width="18" height="16" viewBox="0 0 24 16" className={i === 0 ? "fill-[#0a1216]" : "fill-[#4c5e5e]"}><path d="M12 1L3 8L12 15V10H22V6H12Z" transform={i === 1 ? "matrix(-1 0 0 1 25 0)" : undefined} /></svg>
                </div>
              ))}
            </div>
          </div>
          <div className="ml-[26px] mt-[85px] w-[43px] h-[24px] bg-[#a5b8b4] border border-[#2f3b3d] flex items-center justify-center">
            <svg width="16" height="18" viewBox="0 0 16 18" fill="none" stroke="#0a1216" strokeWidth="3"><line x1="4" y1="15" x2="12" y2="3" /></svg>
          </div>
          <div className="ml-[10px] mt-[85px] w-[44px] h-[24px] bg-[#a5b8b4] border border-[#2f3b3d] flex items-center justify-center">
            <svg width="14" height="18" viewBox="0 0 14 18">
              <path d="M3 8V5A4 4 0 0 1 11 5V8" fill="none" stroke="#0a1216" strokeWidth="2" />
              <rect y="8" width="14" height="10" fill="#0a1216" />
            </svg>
          </div>
        </div>
      </div>
      {/* track stack */}
      <div className="relative flex flex-col">
        <div className="absolute left-[259px] top-0 bottom-0 w-[2px] bg-[#f2f6f5]" />
        <div className="relative h-[14px] flex">
          <Lane w="w-[867px]" />
          <div className="w-[49px] h-full bg-[#97aaa8]" />
          <div className="w-[4px]" />
          <div className="w-[186px] h-full bg-[#4bc3ff]" />
          <div className="w-[4px]" />
          <div className="w-[148px] h-full bg-[#7b8e8b] px-[4px]">
            <div className="h-[7px] border-[2px] border-t-0 border-[#2f3b3d]" />
          </div>
          <div className="w-[4px]" />
          <div className="w-[230px] h-full bg-[#7b8e8b] pl-[6px] flex">
            <div className="w-[192px]" />
            <div className="ml-[12px] h-full flex gap-[1px]">
              <div className="w-[6.5px] bg-[#0a1214]" />
              <div className="w-[6.5px] bg-[#0a1214]" />
            </div>
          </div>
        </div>
        <div className="relative mt-[4px] flex flex-col gap-[4px]">
          {arrTracks.map((t) => (
            <ArrRow key={t.name} t={t} />
          ))}
          <SmallRow
            launch
            name="4 Synthetic C"
            bg="bg-[#4aff9f]"
            stroke="stroke-[#0c5a3e]"
            fill="fill-[#0c5a3e]"
            num="4"
            right={
              <>
                <Square w="w-[42px]" h="h-[26px]"><span className="font-semibold">S</span></Square>
                <Square w="w-[42px]" h="h-[26px]"><MonitorGlyph /></Square>
              </>
            }
          />
          {arrAudio.map((t) => (
            <ArrRow key={t.name} t={t} />
          ))}
          <div className="h-[86px] flex">
            <Lane w="w-[916px]" kind={laneBold}>
              <div className="absolute left-[322px] top-[30px] h-[26px] px-[2px] bg-[#708382] flex items-center text-[20px] leading-none text-[#0a1216] whitespace-nowrap">Drop Files and Devices Here</div>
            </Lane>
            <div className="w-[4px]" />
            <div className="flex-1 bg-[#7b8e8b]" />
          </div>
          <div className="mt-[2px]">
            <SmallRow
              lane={laneBold}
              name="A Reverb"
              bg="bg-[#4d7dff]"
              stroke="stroke-[#14245a]"
              fill="fill-[#14245a]"
              num="A"
              right={
                <>
                  <Square w="w-[33px]" h="h-[26px]"><span className="font-semibold">S</span></Square>
                  <Square w="w-[50px] ml-[1px]" h="h-[26px]" on>Post</Square>
                </>
              }
            />
          </div>
          <SmallRow
            lane={laneBold}
            name="B Delay"
            bg="bg-[#8bacff]"
            stroke="stroke-[#14245a]"
            fill="fill-[#14245a]"
            num="B"
            right={
              <>
                <Square w="w-[33px]" h="h-[26px]"><span className="font-semibold">S</span></Square>
                <Square w="w-[50px] ml-[1px]" h="h-[26px]" on>Post</Square>
              </>
            }
          />
          <SmallRow
            lane={laneLight}
            name="Master"
            bg="bg-[#2d97ff]"
            stroke="stroke-[#0f2050]"
            fill="fill-[#0f2050]"
            pl="ml-[18px]"
            io={<Select label="1/2" icon={<MiniMeter />} h="h-[26px]" />}
            second={
              <>
                <BarValue v="-5.3" width={72} />
                <BarValue v="0" width={83} blue />
              </>
            }
            meter={
              <div className="ml-[12px] mt-[2px] h-[30px] flex gap-[1px]">
                <MeterBar bar={{ dark: 12, bright: 18 }} w="w-[6.5px]" split={6} total={30} />
                <MeterBar bar={{ dark: 12, bright: 18 }} w="w-[6.5px]" split={6} total={30} />
              </div>
            }
            extra={<div className="absolute right-[6px] top-[1px] text-[38px] font-bold leading-[32px] text-[#55686a] [font-family:'Liberation_Sans',sans-serif]">2/1</div>}
          />
        </div>
      </div>
      {/* time ruler */}
      <div className="h-[34px] flex">
        {time.map((t) => (
          <div key={t} className="w-[198px] shrink-0 border-l-[2px] border-[#7b8e8b] h-[20px] mt-[5px] pl-[4px] text-[20px] leading-[22px] text-[#91a5a3]">{t}</div>
        ))}
      </div>
    </div>
  );
}

// ---------- detail / status ----------

function Field({ w, children, align = "justify-center", size = "text-[20px]" }: { w: string; children?: ReactNode; align?: string; size?: string }) {
  return <div className={`${w} h-[26px] ${box} flex items-center ${align} ${size} leading-none text-[#0a1216] shrink-0`}>{children}</div>;
}

function ClipPanel() {
  return (
    <div className="w-[324px] shrink-0 bg-[#7b8e8b] flex flex-col">
      <div className="h-[34px] bg-[#97aaa8] flex items-center justify-between pl-[11px] pr-[10px] text-[20px] leading-none text-[#0a1216]">
        <span>INTRO</span>
        <span>1</span>
      </div>
      <div className="px-[10px] flex flex-col text-[20px] leading-[22px] text-[#0a1216]">
        <div className="mt-[6px] h-[26px] flex items-center">
          <span className="w-[154px] pl-[2px]">Tempo</span>
          <span>Signature</span>
        </div>
        <div className="mt-[4px] flex items-center pl-[2px]">
          <Field w="w-[146px]">126.00</Field>
          <Field w="w-[62px] ml-[8px]">4</Field>
          <span className="w-[20px] text-center">/</span>
          <Field w="w-[62px]">4</Field>
        </div>
        <div className="ml-[2px] mt-[8px] w-[300px] h-[2px] bg-[#2f3b3d]" />
        <div className={`mt-[9px] w-[304px] h-[26px] ${box} bg-[#a6b9b5] flex items-center justify-center`}>Follow Action</div>
        <div className="mt-[8px] flex">
          <div className={`w-[148px] h-[26px] ${box} flex items-center pl-[6px] pr-[4px]`}>
            <svg width="16" height="18" viewBox="0 0 16 18" className="fill-[#0a1216] mr-[14px]"><polygon points="6,0 10,0 10,9 16,9 8,18 0,9 6,9" /></svg>
            <span className="flex-1">Next</span>
            <Caret />
          </div>
          <div className={`ml-[8px] w-[148px] h-[26px] ${box} flex items-center pl-[3px] pr-[4px]`}>
            <span className="flex-1 whitespace-nowrap">No Action</span>
            <Caret />
          </div>
        </div>
        <div className="mt-[8px] flex items-start">
          <Field w="w-[70px]" align="justify-start pl-[2px]" size="text-[19px]">100 %</Field>
          <div className="w-[164px] h-[26px] relative">
            <div className="absolute left-[12px] top-[2px] w-[138px] h-[4px] bg-[#0a1214]" />
            <svg width="20" height="18" viewBox="0 0 20 18" className="absolute left-[3px] top-[8px]"><polygon points="10,1 19,17 1,17" fill="#c6d4d0" stroke="#33403f" strokeWidth="2" /></svg>
          </div>
          <Field w="w-[70px]" align="justify-start pl-[2px]" size="text-[19px]">0 %</Field>
        </div>
        <div className="mt-[8px] flex items-center justify-between w-[304px]">
          <span>Action Time</span>
          <Field w="w-[120px]" align="justify-end pr-[2px]"><span className="whitespace-pre [font-family:'Liberation_Mono',monospace]">8. 0. 0</span></Field>
        </div>
      </div>
    </div>
  );
}

function StatusField({ w, ml = "" }: { w: string; ml?: string }) {
  return (
    <div className={`${w} ${ml} h-[44px] rounded-[6px] bg-[#344244] p-[6px] shrink-0`}>
      <div className="h-full bg-[#7b8e8b]" />
    </div>
  );
}

function MasterBadge({ w, ml }: { w: string; ml: string }) {
  return (
    <div className={`${w} ${ml} h-[44px] rounded-[6px] bg-[#344244] flex items-center justify-center text-[20px] font-medium text-[#0a1216] shrink-0`}>Master</div>
  );
}

// ---------- windows ----------

function MenuBar() {
  const items = ["File", "Edit", "Create", "View", "Options", "Help"];
  const itemMl = ["ml-[39px]", "ml-[38px]", "ml-[37px]", "ml-[38px]", "ml-[38px]", "ml-[40px]"];
  return (
    <div className="h-[46px] shrink-0 border-b-[2px] border-[#1d2c52] bg-[linear-gradient(90deg,#bed1fb,#c8d8fa_50%,#e8ecf6_80%,#eef0f6)] flex items-center pl-[42px] text-[28px] leading-none text-[#0b1a3c] [font-family:'Liberation_Sans',sans-serif]">
      <FaApple size={29} className="mr-[38px]" />
      <span className="font-bold">Live</span>
      {items.map((m, i) => (
        <span key={m} className={itemMl[i]}>{m}</span>
      ))}
      <div className="ml-auto flex items-center">
        <svg width="36" height="34" viewBox="0 0 36 34" className="fill-[#12151a]">
          <circle cx="10" cy="9" r="7" /><circle cx="26" cy="9" r="7" /><circle cx="10" cy="25" r="7" /><circle cx="26" cy="25" r="7" />
          <circle cx="10" cy="9" r="2.5" fill="#d5dffa" /><circle cx="26" cy="25" r="2.5" fill="#d5dffa" />
        </svg>
        <FaDropbox size={32} className="ml-[22px] text-[#12151a]" />
        <svg width="34" height="34" viewBox="0 0 34 34" fill="none" stroke="#12151a" strokeWidth="4" className="ml-[23px]">
          <path d="M27 8A14 14 0 1 0 31 17" />
          <polygon points="22,2 33,3 29,13" fill="#12151a" stroke="none" />
        </svg>
        <svg width="50" height="32" viewBox="0 0 50 32" className="ml-[23px]">
          <polygon points="25,0 50,16 25,32 0,16" fill="#2f7fe8" />
          <text x="25" y="21" textAnchor="middle" fontSize="13" fontWeight="700" fill="#eaf2ff" fontFamily="Liberation Sans, sans-serif">UA</text>
        </svg>
        <History size={36} strokeWidth={1.6} className="ml-[28px] text-[#12151a]" />
        <Bluetooth size={30} strokeWidth={1.4} className="ml-[44px] text-[#47526a]" />
        <svg width="42" height="30" viewBox="0 0 42 30" className="ml-[21px]">
          <polygon points="8,0 34,0 42,10 21,30 0,10" fill="#bccbd6" />
          <polygon points="21,5 27,12 23,12 23,24 19,24 19,12 15,12" fill="#eef2f6" />
        </svg>
        <span className="ml-[35px] text-[27px] text-[#12192b]">Fri 17:40</span>
        <span className="ml-[29px] text-[29px] text-[#12192b]">Jonathan Musgrave</span>
        <Search size={32} strokeWidth={1.8} className="ml-[29px] text-[#12192b]" />
        <svg width="38" height="30" viewBox="0 0 38 30" className="ml-[30px] mr-[46px] fill-[#12151a]">
          <rect width="4" height="4" y="1" /><rect x="8" y="1" width="30" height="4" />
          <rect width="4" height="4" y="13" /><rect x="8" y="13" width="24" height="4" />
          <rect width="4" height="4" y="25" /><rect x="8" y="25" width="30" height="4" />
        </svg>
      </div>
    </div>
  );
}

function SessionWindow() {
  return (
    <div className="w-[1603px] shrink-0 h-full flex flex-col rounded-t-[10px] overflow-hidden bg-[#5a6b6d] border-r border-[#8fa2a0]">
      <div className="h-[43px] shrink-0 bg-[linear-gradient(180deg,#e9efeb,#d5dfda)] border-b-[2px] border-[#bcc8c4] flex items-center relative">
        <div className="ml-[16px] w-[24px] h-[24px] rounded-full bg-[#ff4d6a] flex items-center justify-center"><div className="w-[7px] h-[7px] rounded-full bg-[#401018]" /></div>
        <div className="ml-[16px] w-[24px] h-[24px] rounded-full bg-[#ffb020]" />
        <div className="ml-[16px] w-[24px] h-[24px] rounded-full bg-[#55ff11]" />
        <div className="ml-[458px] text-[26px] leading-[30px] text-[#46565a] whitespace-pre [font-family:'Liberation_Sans',sans-serif]">Session View P7g  [Session View P6]</div>
      </div>
      <Toolbar first="pl-[15px]" keyW="w-[52px]" sliver />
      <div className="h-[1148px] flex">
        <div className="w-[62px] shrink-0 pl-[16px] flex flex-col justify-between">
          <CircleBtn>
            <svg width="18" height="24" viewBox="0 0 18 24" className="fill-[#9aadab]"><polygon points="0,0 18,0 9,24" /></svg>
          </CircleBtn>
          <CircleBtn>
            <svg width="22" height="24" viewBox="0 0 22 24" fill="none" stroke="#9aadab" strokeWidth="3"><path d="M1 7Q6 1 11 7T21 7M1 17Q6 11 11 17T21 17" /></svg>
          </CircleBtn>
        </div>
        <div className="flex-1 rounded-l-[10px] bg-[#344042] flex overflow-hidden">
          <div className="w-[1470px] shrink-0 pl-[8px] pt-[8px] flex flex-col">
            <div className="flex">
              <div className="flex gap-[4px]">
                {tracks.map((t) => (
                  <TrackColumn key={t.title} t={t} />
                ))}
              </div>
              <div className="ml-[4px] w-[54px] shrink-0 h-[1109px] bg-[linear-gradient(90deg,#8a9c9a,#7a8e8b)] flex flex-col">
                <div className="mt-[38px] h-[34px] bg-[#97aaa8]" />
              </div>
              <div className="ml-[6px]"><MasterColumn /></div>
            </div>
            <div className="mt-[9px] w-[1134px] h-[12px] rounded-full bg-[#5f7274]" />
          </div>
          <div className="flex-1 flex flex-col bg-[#2c3739]">
            <div className="h-[92px] ml-[8px] bg-[#5a6b6d] rounded-bl-[12px] flex flex-col items-end">
              <CircleBtn>{bars3("fill-[#8ea19f]")}</CircleBtn>
              <CircleBtn top="mt-[8px]">{cols3("fill-[#ffa116]")}</CircleBtn>
            </div>
            <div className="pl-[14px] mt-[800px] flex flex-col">
              <SideDot label="I·O" on />
              <SideDot label="S" on top="mt-[11px]" shape="rounded-t-[13px]" />
              <SideDot label="R" top="mt-[4px]" shape="rounded-b-[13px]" h="h-[24px]" />
              <SideDot label="M" on top="mt-[12px]" />
              <SideDot label="D" top="mt-[12px]" />
              <SideDot label="✕" top="mt-[12px]" />
              <SideDot label="C" top="mt-[12px]" />
            </div>
          </div>
        </div>
        <div className="w-[16px] shrink-0" />
      </div>
      <div className="h-[16px]" />
      <div className="h-[400px] flex pl-[16px] pr-[16px]">
        <div className="w-full bg-[#344244] rounded-[8px] p-[8px] flex gap-[8px]">
          <ClipPanel />
          <div className="flex-1 bg-[#7b8e8b] flex items-center justify-center text-[19px] text-[#0a1216]">INTRO</div>
        </div>
      </div>
      <div className="mt-[16px] h-[44px] flex items-center pl-[16px]">
        <CircleBtn>
          <svg width="18" height="24" viewBox="0 0 18 24" className="fill-[#9aadab]"><polygon points="0,0 18,12 0,24" /></svg>
        </CircleBtn>
        <StatusField w="w-[926px]" ml="ml-[16px]" />
        <StatusField w="w-[408px]" ml="ml-[18px]" />
        <MasterBadge w="w-[94px]" ml="ml-[16px]" />
        <div className="ml-[16px]">
          <CircleBtn>
            <svg width="24" height="18" viewBox="0 0 24 18" className="fill-[#9aadab]"><polygon points="0,18 24,18 12,0" /></svg>
          </CircleBtn>
        </div>
      </div>
    </div>
  );
}

function ArrangementWindow() {
  return (
    <div className="flex-1 h-full flex flex-col rounded-t-[10px] overflow-hidden bg-[#5a6b6d]">
      <div className="h-[43px] shrink-0 bg-[#f3f5f4] border-b-[2px] border-[#d4dad8] flex items-center">
        <div className="ml-[14px] w-[24px] h-[24px] rounded-full bg-[#dfe3e1]" />
        <div className="ml-[17px] w-[24px] h-[24px] rounded-full bg-[#dfe3e1]" />
        <div className="ml-[17px] w-[24px] h-[24px] rounded-full bg-[#dfe3e1]" />
      </div>
      <Toolbar first="pl-[23px]" keyW="w-[44px]" />
      <div className="h-[1156px] flex pl-[15px]">
        <div className="w-[1566px] shrink-0 rounded-[10px] bg-[#354143] flex overflow-hidden">
          <ArrangementPanel />
          <div className="flex-1 flex flex-col bg-[#354143]">
            <div className="h-[96px] bg-[#5a6b6d] rounded-bl-[14px] flex flex-col items-center pt-[8px]">
              <CircleBtn>{bars3("fill-[#ffa116]")}</CircleBtn>
              <CircleBtn top="mt-[4px]">{cols3("fill-[#94a8a5]")}</CircleBtn>
            </div>
            <div className="ml-[20px] mt-[138px] w-[14px] h-[699px] rounded-full bg-[#4a5b5d]" />
            <div className="pl-[14px] mt-[23px] flex flex-col gap-[12px]">
              <SideDot label="I·O" on />
              <SideDot label="R" on />
              <SideDot label="M" on />
              <SideDot label="D" />
            </div>
          </div>
        </div>
      </div>
      <div className="h-[16px]" />
      <div className="h-[392px] flex pl-[15px]">
        <div className="w-[1566px] bg-[#344244] rounded-[8px] py-[8px] pr-[8px] flex">
          <div className="w-[30px] shrink-0 relative">
            <div className="absolute left-[10px] top-[150px] w-[10px] h-[78px] flex gap-[1px] flex-col">
              <div className="h-[16px] bg-[#0a1214]" />
              <div className="flex-1 bg-[#72f80a]" />
            </div>
          </div>
          <div className="flex-1 bg-[#7b8e8b] flex items-center justify-center text-[20px] text-[#0a1216]">Drop Audio Effects Here</div>
        </div>
      </div>
      <div className="mt-[16px] h-[44px] flex items-center">
        <div className="w-[1011px] shrink-0" />
        <StatusField w="w-[406px]" />
        <MasterBadge w="w-[90px]" ml="ml-[16px]" />
        <div className="ml-[18px]">
          <CircleBtn>
            <svg width="24" height="18" viewBox="0 0 24 18" className="fill-[#9aadab]"><polygon points="0,18 24,18 12,0" /></svg>
          </CircleBtn>
        </div>
      </div>
    </div>
  );
}

export default function App() {
  return (
    <div className="w-[3200px] h-[1800px] overflow-hidden flex flex-col bg-[#c8d4ec] tabular-nums [font-family:Inter,sans-serif]">
      <MenuBar />
      <div className="flex-1 flex min-h-0">
        <SessionWindow />
        <ArrangementWindow />
      </div>
    </div>
  );
}
